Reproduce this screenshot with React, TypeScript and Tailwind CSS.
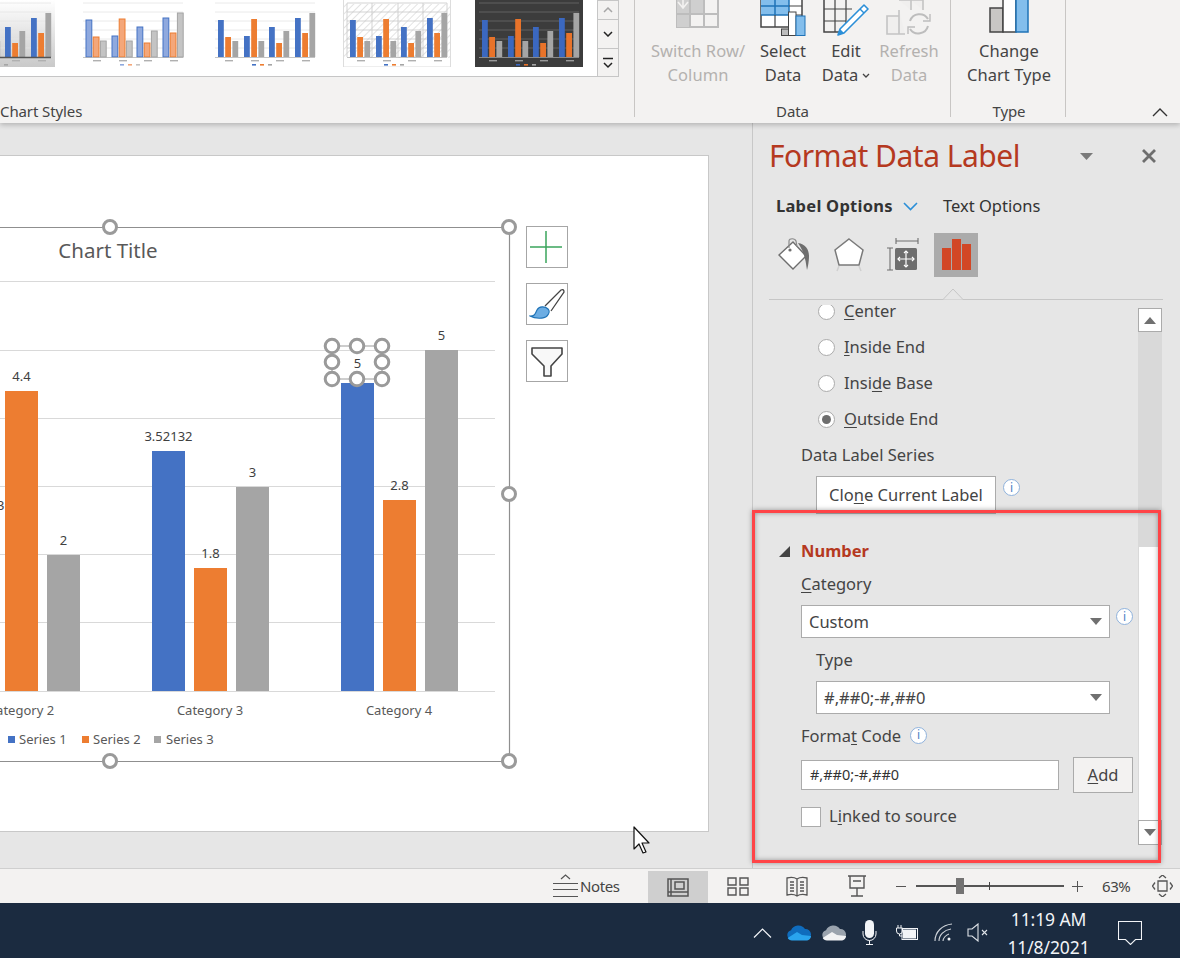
import React from 'react';

const FONT = "font-['Noto_Sans','Open_Sans',sans-serif]";

const CATS = [
  { x: 7, h: [37, 20, 16] },
  { x: 33, h: [21, 38, 16] },
  { x: 58, h: [30, 14, 26] },
  { x: 84, h: [39, 24, 44] },
];

type Variant = 'gradient' | 'soft' | 'plain' | 'hatch' | 'dark';

const MiniChart = ({ id, variant }: { id: string; variant: Variant }) => {
  const grid = variant === 'dark' ? '#6a6a6a' : variant === 'hatch' ? '#c8c8c8' : '#e4e4e4';
  const colors =
    variant === 'dark'
      ? ['#3b68c0', '#e8732a', '#a5a5a5']
      : variant === 'soft'
        ? ['#8fa9de', '#f4a77a', '#c4c4c4']
        : ['#4472c4', '#ed7d31', '#a5a5a5'];
  const strokes = variant === 'soft' ? ['#4472c4', '#ed7d31', '#a5a5a5'] : colors;
  return (
    <svg viewBox="0 0 108 67" className="w-[108px] h-[67px] shrink-0 blur-[0.5px]">
      <defs>
        <linearGradient id={id + 'g'} x1="0" y1="0" x2="0" y2="1">
          <stop offset="0" stopColor="#ffffff" />
          <stop offset="1" stopColor="#c9c9c9" />
        </linearGradient>
        <pattern id={id + 'h'} width="5" height="5" patternUnits="userSpaceOnUse" patternTransform="rotate(45)">
          <line x1="0" y1="0" x2="0" y2="5" stroke="#dcdcdc" strokeWidth="1.6" />
        </pattern>
      </defs>
      {variant === 'gradient' && <rect width="108" height="67" fill={`url(#${id}g)`} />}
      {variant === 'hatch' && (
        <>
          <rect width="108" height="54" y="4" fill={`url(#${id}h)`} />
          <rect x="0.5" y="-2" width="107" height="69" fill="none" stroke="#dddddd" />
        </>
      )}
      {variant === 'dark' && <rect width="108" height="67" fill="#3c3c3c" />}
      {[3, 12, 21, 30, 39, 48].map(y => (
        <line key={y} x1="4" x2="104" y1={y} y2={y} stroke={grid} strokeWidth="0.8" />
      ))}
      {variant === 'hatch' &&
        [4, 29, 55, 80, 104].map(x => <line key={x} x1={x} x2={x} y1="3" y2="57" stroke={grid} strokeWidth="0.8" />)}
      {CATS.map(c =>
        c.h.map((h, i) => (
          <rect
            key={c.x + '-' + i}
            x={c.x + i * 7.2}
            y={57 - h}
            width="5.8"
            height={h}
            fill={colors[i]}
            stroke={strokes[i]}
            strokeWidth={variant === 'soft' ? 1 : 0}
          />
        )),
      )}
      <line x1="4" x2="104" y1="57.5" y2="57.5" stroke={variant === 'gradient' ? '#555' : '#aaa'} strokeWidth={variant === 'gradient' ? 1.5 : 0.7} />
      {[14, 40, 65, 91].map(x => (
        <rect key={x} x={x} y="60" width="8" height="1.4" fill={variant === 'dark' ? '#999' : '#b0b0b0'} />
      ))}
      <rect x="41" y="64" width="4" height="1.6" fill={colors[0]} />
      <rect x="49" y="64" width="4" height="1.6" fill={colors[1]} />
      <rect x="57" y="64" width="4" height="1.6" fill={colors[2]} />
    </svg>
  );
};

const SpinButton = ({ h, children, last }: { h: string; children?: React.ReactNode; last?: boolean }) => (
  <div className={`${h} flex items-center justify-center border-x border-t border-[#c6c6c6] bg-[#f3f2f1] ${last ? 'border-b' : ''}`}>
    {children}
  </div>
);

const SwitchIcon = () => (
  <svg width="44" height="28" viewBox="0 0 44 28">
    <path d="M1 -2h41v29H1z" fill="#f3f2f1" stroke="#bdbdbd" strokeWidth="2" />
    <path d="M1 -2h27v16H14v13H1z" fill="#cfcfcf" />
    <path d="M14 -2v29M28 -2v29M1 14h41" stroke="#bdbdbd" strokeWidth="2" fill="none" />
    <path d="M2 2l5 6 5-6M7 8V0" fill="none" stroke="#f3f2f1" strokeWidth="1.6" />
  </svg>
);

const SelectDataIcon = () => (
  <svg width="46" height="36" viewBox="0 0 46 36">
    <rect x="1" y="-2" width="41" height="29" fill="#fff" stroke="#444" strokeWidth="1.5" />
    <rect x="1" y="-2" width="28" height="17" fill="#83beec" />
    <path d="M15 -2v17M29 -2v17M1 6h28M1 15h28" stroke="#1f73b7" strokeWidth="1.5" fill="none" />
    <path d="M29 6h13M15 15v12M29 15h13" stroke="#444" strokeWidth="1.2" fill="none" />
    <rect x="21.5" y="29" width="7" height="6.5" fill="#bdbdbd" stroke="#444" />
    <rect x="28.5" y="12" width="7.5" height="23.5" fill="#fff" stroke="#444" />
    <rect x="36" y="16" width="9" height="19.5" fill="#83beec" stroke="#1f73b7" />
  </svg>
);

const EditDataIcon = () => (
  <svg width="47" height="36" viewBox="0 0 47 36">
    <path d="M1 -2h31M1 -2v34h20" fill="none" stroke="#444" strokeWidth="1.5" />
    <path d="M1 9h28M1 21h22M12 -2v34M23 -2v26" fill="none" stroke="#444" strokeWidth="1.2" />
    <path d="M41 5l4 4-24 24-6 2 2-6z" fill="#fff" stroke="#2b8fd8" strokeWidth="1.6" strokeLinejoin="round" />
    <path d="M15 35l2-6 4 4z" fill="#2b8fd8" />
    <path d="M37 9l4 4" stroke="#2b8fd8" strokeWidth="1.4" />
  </svg>
);

const RefreshIcon = () => (
  <svg width="46" height="36" viewBox="0 0 46 36">
    <path d="M1 16h12v18H1zM13 0h12v10M25 0h12v10M13 10v24h6" fill="#f0efee" stroke="#c4c4c4" strokeWidth="1.6" />
    <path d="M24 21a10 10 0 0 1 18-2M42 26a10 10 0 0 1-18 3" fill="none" stroke="#bdbdbd" strokeWidth="2" />
    <path d="M44 14v7h-7M22 34v-7h7" fill="none" stroke="#bdbdbd" strokeWidth="1.4" />
  </svg>
);

const ChangeTypeIcon = () => (
  <svg width="40" height="33" viewBox="0 0 40 33">
    <rect x="1" y="8" width="13" height="24" fill="#c8c6c4" stroke="#444" strokeWidth="1.5" />
    <rect x="14" y="-2" width="13" height="34" fill="#fff" stroke="#444" strokeWidth="1.5" />
    <rect x="27" y="-2" width="12" height="34" fill="#83beec" stroke="#1f73b7" strokeWidth="1.5" />
  </svg>
);

const Command = ({
  w,
  ml,
  icon,
  lines,
  off,
}: {
  w: string;
  ml: string;
  icon: React.ReactNode;
  lines: React.ReactNode[];
  off?: boolean;
}) => (
  <div className={`${w} ${ml} flex flex-col items-center shrink-0`}>
    <div className="h-[39px] flex items-start justify-center">{icon}</div>
    <div className={`flex flex-col items-center text-[16.5px] leading-[24px] whitespace-nowrap tracking-[0.05px] ${off ? 'text-[#b3b1af]' : 'text-[#444]'}`}>
      {lines.map((l, i) => (
        <span key={i}>{l}</span>
      ))}
    </div>
  </div>
);

const Ribbon = () => (
  <div className="h-[123px] shrink-0 bg-[#f3f2f1] relative z-10 shadow-[0_2px_5px_rgba(0,0,0,0.22)] flex">
    <div className="w-[635px] h-[117px] border-r border-[#c8c6c4] flex flex-col shrink-0">
      <div className="flex h-[77px] shrink-0">
        <div className="w-[597px] h-[77px] bg-white border-b border-[#c6c6c6] overflow-hidden shrink-0">
          <div className="flex gap-[24px] ml-[-53px]">
            <MiniChart id="m1" variant="gradient" />
            <MiniChart id="m2" variant="soft" />
            <MiniChart id="m3" variant="plain" />
            <MiniChart id="m4" variant="hatch" />
            <MiniChart id="m5" variant="dark" />
          </div>
        </div>
        <div className="w-[22px] flex flex-col">
          <SpinButton h="h-[19px]">
            <svg width="10" height="6" viewBox="0 0 10 6"><path d="M1 5l4-4 4 4" fill="none" stroke="#a6a6a6" strokeWidth="1.5" /></svg>
          </SpinButton>
          <SpinButton h="h-[29px]">
            <svg width="10" height="6" viewBox="0 0 10 6"><path d="M1 1l4 4 4-4" fill="none" stroke="#222" strokeWidth="1.5" /></svg>
          </SpinButton>
          <SpinButton h="h-[29px]" last>
            <svg width="10" height="12" viewBox="0 0 10 12"><path d="M0 1.5h10" stroke="#222" strokeWidth="1.5" /><path d="M1 6l4 4 4-4" fill="none" stroke="#222" strokeWidth="1.5" /></svg>
          </SpinButton>
        </div>
      </div>
      <div className="text-[15px] leading-[20px] text-[#444] mt-[24px] tracking-[-0.1px] shrink-0">Chart Styles</div>
    </div>
    <div className="w-[316px] h-[117px] border-r border-[#c8c6c4] flex flex-col shrink-0">
      <div className="flex h-[101px] shrink-0">
        <Command ml="ml-[14px]" w="w-[98px]" off icon={<SwitchIcon />} lines={['Switch Row/', 'Column']} />
        <Command ml="ml-[11px]" w="w-[50px]" icon={<SelectDataIcon />} lines={['Select', 'Data']} />
        <Command ml="ml-[13px]" w="w-[50px]" icon={<EditDataIcon />} lines={['Edit', <span key="d" className="flex items-center gap-[4px]">Data<svg width="8" height="5" viewBox="0 0 8 5"><path d="M1 1l3 3 3-3" fill="none" stroke="#444" strokeWidth="1.3" /></svg></span>]} />
        <Command ml="ml-[8px]" w="w-[60px]" off icon={<RefreshIcon />} lines={['Refresh', 'Data']} />
      </div>
      <div className="text-[15px] leading-[20px] text-[#444] text-center tracking-[-0.1px] shrink-0">Data</div>
    </div>
    <div className="w-[115px] h-[117px] border-r border-[#c8c6c4] pl-[2px] flex flex-col shrink-0">
      <div className="h-[101px] flex justify-center shrink-0">
        <Command ml="" w="w-[90px]" icon={<ChangeTypeIcon />} lines={['Change', 'Chart Type']} />
      </div>
      <div className="text-[15px] leading-[20px] text-[#444] text-center tracking-[-0.1px] shrink-0">Type</div>
    </div>
    <div className="flex-1 flex justify-end items-end pr-[12px] pb-[6px]">
      <svg width="16" height="9" viewBox="0 0 16 9"><path d="M1 8l7-7 7 7" fill="none" stroke="#333" strokeWidth="1.4" /></svg>
    </div>
  </div>
);

const BARS = [
  { x: 5, w: 33, top: 391, c: '#ed7d31', label: '4.4' },
  { x: 47, w: 33, top: 555, c: '#a5a5a5', label: '2' },
  { x: 152, w: 33, top: 451, c: '#4472c4', label: '3.52132' },
  { x: 194, w: 33, top: 568, c: '#ed7d31', label: '1.8' },
  { x: 236, w: 33, top: 487, c: '#a5a5a5', label: '3' },
  { x: 341, w: 33, top: 383, c: '#4472c4', label: '' },
  { x: 383, w: 33, top: 500, c: '#ed7d31', label: '2.8' },
  { x: 425, w: 33, top: 350, c: '#a5a5a5', label: '5' },
];

const Handle = ({ x, y, r = 6.5 }: { x: number; y: number; r?: number }) => (
  <circle cx={x} cy={y} r={r} fill="#fff" stroke="#9a9a9a" strokeWidth="3" />
);

const Chart = () => (
  <svg viewBox="0 156 709 675" className="absolute inset-0 w-[709px] h-[675px]">
    <g fontFamily="'Noto Sans', sans-serif">
      {[281, 350, 418, 486, 554, 622].map(y => (
        <line key={y} x1="0" x2="495" y1={y + 0.5} y2={y + 0.5} stroke="#d9d9d9" />
      ))}
      {BARS.map(b => (
        <g key={b.x}>
          <rect x={b.x} y={b.top} width={b.w} height={691 - b.top} fill={b.c} />
          {b.label && (
            <text x={b.x + 16.5} y={b.top - 10} textAnchor="middle" fontSize="13" fill="#404040">{b.label}</text>
          )}
        </g>
      ))}
      <text x="-3" y="510" fontSize="13" fill="#404040">3</text>
      <line x1="0" x2="495" y1="691.5" y2="691.5" stroke="#d9d9d9" />
      <text x="108" y="258" textAnchor="middle" fontSize="20.5" fill="#595959">Chart Title</text>
      <text x="21" y="715" textAnchor="middle" fontSize="13" fill="#595959">Category 2</text>
      <text x="210" y="715" textAnchor="middle" fontSize="13" fill="#595959">Category 3</text>
      <text x="399" y="715" textAnchor="middle" fontSize="13" fill="#595959">Category 4</text>
      <rect x="8" y="736" width="7" height="7" fill="#4472c4" />
      <text x="19" y="744" fontSize="13" fill="#595959">Series 1</text>
      <rect x="82" y="736" width="7" height="7" fill="#ed7d31" />
      <text x="93" y="744" fontSize="13" fill="#595959">Series 2</text>
      <rect x="154" y="736" width="7" height="7" fill="#a5a5a5" />
      <text x="166" y="744" fontSize="13" fill="#595959">Series 3</text>
      <path d="M0 227.5H509.5V761.5H0" fill="none" stroke="#8f8f8f" strokeWidth="1.2" />
      <Handle x={110} y={227} />
      <Handle x={509} y={227} />
      <Handle x={509} y={494} />
      <Handle x={110} y={761} />
      <Handle x={509} y={761} />
      <rect x="332" y="346" width="50" height="33" fill="#fff" fillOpacity="0" stroke="#9c9c9c" />
      <text x="357.5" y="368" textAnchor="middle" fontSize="13" fill="#404040">5</text>
      {[[332, 346], [357, 346], [382, 346], [332, 362], [382, 362], [332, 379], [357, 379], [382, 379]].map(([x, y]) => (
        <Handle key={x + '-' + y} x={x} y={y} r={6.8} />
      ))}
    </g>
  </svg>
);

const SideButton = ({ children }: { children: React.ReactNode }) => (
  <div className="w-[42px] h-[42px] bg-white border border-[#a6a6a6] flex items-center justify-center">{children}</div>
);

const Canvas = () => (
  <div className="w-[752px] shrink-0 pt-[32px] bg-[#e6e6e6] overflow-hidden">
    <div className="relative w-[709px] h-[677px] bg-white border border-l-0 border-[#c8c8c8]">
      <Chart />
      <div className="absolute left-[526px] top-[70px] flex flex-col gap-[15px]">
        <SideButton>
          <svg width="34" height="34" viewBox="0 0 34 34" className="-ml-[3px] -mt-px"><path d="M17 1v32M1 17h32" stroke="#3ba55c" strokeWidth="1.5" /></svg>
        </SideButton>
        <SideButton>
          <svg width="36" height="32" viewBox="0 0 36 32">
            <path d="M16 18L32 2c2-1 3 0 3 2L22 23" fill="#fff" stroke="#444" strokeWidth="1.3" />
            <path d="M1 28c5 0 5-2 7-6 2-4 8-4 11-1 2 2 1 5-1 7-3 3-12 3-17 0z" fill="#6cade3" stroke="#1f73b7" strokeWidth="1.2" />
          </svg>
        </SideButton>
        <SideButton>
          <svg width="34" height="34" viewBox="0 0 34 34">
            <path d="M2 4h30v6L21 22v10h-7V22L2 10z" fill="#f8f8f8" stroke="#444" strokeWidth="1.6" strokeLinejoin="round" />
          </svg>
        </SideButton>
      </div>
    </div>
  </div>
);

const Radio = ({ label, on }: { label: React.ReactNode; on?: boolean }) => (
  <div className="h-[36px] flex items-center pl-[65px] gap-[9px]">
    <span className="w-[17px] h-[17px] rounded-full bg-white border border-[#ababab] flex items-center justify-center shrink-0">
      {on && <span className="w-[9px] h-[9px] rounded-full bg-[#6e6e6e]" />}
    </span>
    <span>{label}</span>
  </div>
);

const InfoDot = ({ className = '' }: { className?: string }) => (
  <span className={`w-[17px] h-[17px] rounded-full border border-[#8fb2dc] bg-white text-[#4a80c4] text-[12px] leading-none flex items-center justify-center shrink-0 ${className}`}>i</span>
);

const Arrow = () => (
  <svg width="12" height="7" viewBox="0 0 12 7" className="shrink-0"><path d="M0 0h12L6 7z" fill="#707070" /></svg>
);

const Select = ({ value, width }: { value: string; width: string }) => (
  <div className={`${width} h-[33px] bg-white border border-[#ababab] flex items-center justify-between px-[7px] shrink-0`}>
    <span className="pt-px">{value}</span>
    <Arrow />
  </div>
);

const Scrollbar = () => (
  <div className="w-[24px] mr-[18px] mt-[3px] mb-[23px] flex flex-col shrink-0">
    <div className="h-[24px] bg-white border border-[#ababab] flex items-center justify-center shrink-0">
      <svg width="12" height="7" viewBox="0 0 12 7"><path d="M0 7h12L6 0z" fill="#707070" /></svg>
    </div>
    <div className="h-[215px] bg-[#d9d9d9] shrink-0" />
    <div className="flex-1 bg-white border-x border-[#d9d9d9]" />
    <div className="h-[25px] bg-white border border-[#ababab] flex items-center justify-center shrink-0">
      <Arrow />
    </div>
  </div>
);

const Pane = () => (
  <div className="flex-1 min-w-0 bg-[#e6e6e6] border-l border-[#c8c8c8] flex flex-col text-[16.5px] text-[#444] overflow-hidden">
    <div className="h-[38px] mt-[14px] pl-[16px] pr-[23px] flex items-center shrink-0">
      <span className="text-[30px] leading-none text-[#b5391f] tracking-[-0.5px]">Format Data Label</span>
      <svg width="13" height="7" viewBox="0 0 13 7" className="ml-auto"><path d="M0 0h13L6.5 7z" fill="#7a7a7a" /></svg>
      <svg width="16" height="16" viewBox="0 0 16 16" className="ml-[48px]"><path d="M2 2l12 12M14 2L2 14" stroke="#6e6e6e" strokeWidth="2.8" /></svg>
    </div>
    <div className="h-[30px] mt-[16px] pl-[23px] flex items-center shrink-0">
      <span className="font-bold text-[#333] tracking-[0.25px] w-[117px] whitespace-nowrap shrink-0">Label Options</span>
      <svg width="15" height="9" viewBox="0 0 15 9" className="ml-[10px] shrink-0"><path d="M1 1l6.5 6.5L14 1" fill="none" stroke="#2b8fd8" strokeWidth="1.6" /></svg>
      <span className="ml-[25px] text-[#333]">Text Options</span>
    </div>
    <div className="h-[44px] mt-[12px] pl-[25px] flex items-center shrink-0">
      <svg width="33" height="34" viewBox="0 0 33 34" className="shrink-0">
        <path d="M1 17L15 4l13 14-13 13z" fill="#fff" stroke="#6e6e6e" strokeWidth="1.4" />
        <path d="M11 10V3c0-3 6-3 7 0l1 6" fill="none" stroke="#8a8a8a" strokeWidth="1.2" />
        <circle cx="12" cy="12" r="1.6" fill="#6e6e6e" />
        <path d="M20 5c7 1 11 6 11 13 0 5-1 11-2 14-1-5-1-8-2-11-1-5-3-10-7-16z" fill="#6e6e6e" />
      </svg>
      <svg width="32" height="34" viewBox="0 0 32 34" className="ml-[22px] shrink-0">
        <path d="M16 1l14 11-4 15H6L2 12z" fill="#fff" stroke="#7a7a7a" strokeWidth="1.5" />
        <path d="M6 28l-2 5M26 28l2 5" stroke="#d0d0d0" strokeWidth="1.5" />
      </svg>
      <svg width="33" height="34" viewBox="0 0 33 34" className="ml-[21px] shrink-0">
        <path d="M10 3h22M10 0v6M32 0v6M1 10h6M1 32h6M4 10v22" fill="none" stroke="#6e6e6e" strokeWidth="1.1" />
        <rect x="9" y="10" width="22" height="22" rx="1.5" fill="#6e6e6e" />
        <path d="M20 13v16M12 21h16" stroke="#fff" strokeWidth="1.2" />
        <path d="M18 15l2-2 2 2M18 27l2 2 2-2M14 19l-2 2 2 2M26 19l2 2-2 2" fill="none" stroke="#fff" strokeWidth="1.2" />
      </svg>
      <div className="ml-[15px] w-[44px] h-[44px] bg-[#ababab] flex items-end justify-center gap-px pb-[7px] shrink-0">
        <span className="w-[9px] h-[22px] bg-[#d24726]" />
        <span className="w-[9px] h-[31px] bg-[#d24726]" />
        <span className="w-[9px] h-[26px] bg-[#d24726]" />
      </div>
    </div>
    <div className="relative h-px mt-[22px] ml-[16px] mr-[17px] bg-[#c6c6c6] shrink-0">
      <svg width="22" height="12" viewBox="0 0 22 12" className="absolute left-[173px] bottom-0">
        <path d="M0 11.5h1L11 1l10 10.5h1" fill="#e6e6e6" stroke="#c6c6c6" />
      </svg>
    </div>
    <div className="flex-1 min-h-0 flex overflow-hidden mt-[5px]">
      <div className="flex-1 min-w-0 mt-[-12px]">
        <Radio label={<><u className="underline-offset-2">C</u>enter</>} />
        <Radio label={<><u className="underline-offset-2">I</u>nside End</>} />
        <Radio label={<>Insi<u className="underline-offset-2">d</u>e Base</>} />
        <Radio on label={<><u className="underline-offset-2">O</u>utside End</>} />
        <div className="h-[36px] pl-[48px] flex items-center">Data Label Series</div>
        <div className="mt-[3px] ml-[63px] flex items-start gap-[7px]">
          <div className="w-[180px] h-[38px] bg-white border border-[#ababab] flex items-center justify-center">
            <span>Clo<u className="underline-offset-2">n</u>e Current Label</span>
          </div>
          <InfoDot className="mt-[3px]" />
        </div>
        <div className="h-[24px] mt-[25px] pl-[26px] flex items-center">
          <svg width="11" height="11" viewBox="0 0 11 11" className="shrink-0"><path d="M11 0v11H0z" fill="#444" /></svg>
          <span className="ml-[11px] font-bold text-[#b5391f]">Number</span>
        </div>
        <div className="h-[24px] mt-[9px] pl-[48px] flex items-center"><span><u className="underline-offset-2">C</u>ategory</span></div>
        <div className="mt-[9px] pl-[48px] flex items-start gap-[6px]">
          <Select value="Custom" width="w-[309px]" />
          <InfoDot className="mt-[3px]" />
        </div>
        <div className="h-[24px] mt-[10px] pl-[63px] flex items-center">Type</div>
        <div className="mt-[9px] pl-[63px]"><Select value="#,##0;-#,##0" width="w-[294px]" /></div>
        <div className="h-[24px] mt-[10px] pl-[48px] flex items-center gap-[9px]">
          <span>Forma<u className="underline-offset-2">t</u> Code</span>
          <InfoDot className="-mt-[2px]" />
        </div>
        <div className="mt-[9px] pl-[48px] flex items-center">
          <div className="w-[258px] h-[30px] bg-white border border-[#ababab] flex items-center pl-[8px] text-[14.5px] text-[#333]">#,##0;-#,##0</div>
          <div className="ml-[14px] w-[60px] h-[36px] bg-[#f3f2f1] border border-[#ababab] flex items-center justify-center"><span><u className="underline-offset-2">A</u>dd</span></div>
        </div>
        <div className="mt-[12px] pl-[48px] flex items-center gap-[8px]">
          <span className="w-[20px] h-[20px] bg-white border border-[#ababab] shrink-0" />
          <span className="-mt-px">L<u className="underline-offset-2">i</u>nked to source</span>
        </div>
      </div>
      <Scrollbar />
    </div>
  </div>
);

const StatusBar = () => (
  <div className="h-[35px] shrink-0 bg-[#f3f2f1] border-t border-[#cfcfcf] flex items-center pl-[553px] text-[#444]">
    <svg width="25" height="24" viewBox="0 0 25 24" className="shrink-0">
      <path d="M8 5l4.500-4 4.500 4M0 9.500h25M0 15.500h25M0 22.500h25" fill="none" stroke="#555" strokeWidth="1.2" />
    </svg>
    <span className="ml-[2px] w-[41px] text-[15px] tracking-[-0.4px]">Notes</span>
    <div className="ml-[27px] w-[60px] self-stretch mt-[2px] bg-[#cfcfcf] flex items-center justify-center shrink-0">
      <svg width="22" height="19" viewBox="0 0 22 19"><path d="M1 1h20v17H1zM4 1v17M1 14h20M8 4h9v7H8z" fill="none" stroke="#555" strokeWidth="1.5" /></svg>
    </div>
    <svg width="22" height="19" viewBox="0 0 22 19" className="ml-[19px] shrink-0"><path d="M1 1h8v7H1zM13 1h8v7h-8zM1 11h8v7H1zM13 11h8v7h-8z" fill="none" stroke="#555" strokeWidth="1.4" /></svg>
    <svg width="22" height="21" viewBox="0 0 22 21" className="ml-[37px] shrink-0"><path d="M11 3C8 1 5 1 1 2v17c4-1 7-1 10 1 3-2 6-2 10-1V2c-4-1-7-1-10 1zM11 3v17M4 6h4M4 9h4M4 12h4M4 15h4M14 6h4M14 9h4M14 12h4M14 15h4" fill="none" stroke="#555" strokeWidth="1.3" /></svg>
    <svg width="20" height="22" viewBox="0 0 20 22" className="ml-[39px] shrink-0"><path d="M1 1h18M3 1v12h14V1M10 13v8M4 21h12M6 6h8" fill="none" stroke="#555" strokeWidth="1.4" /></svg>
    <span className="ml-[29px] w-[10px] h-px bg-[#555] shrink-0" />
    <div className="ml-[10px] w-[148px] h-[16px] relative flex items-center shrink-0">
      <div className="w-full h-[2px] bg-[#555]" />
      <span className="absolute left-[40px] w-[8px] h-[16px] bg-[#737373]" />
      <span className="absolute left-[73px] w-px h-[8px] bg-[#444]" />
    </div>
    <svg width="11" height="11" viewBox="0 0 11 11" className="ml-[8px] shrink-0"><path d="M5.500 0v11M0 5.500h11" stroke="#555" /></svg>
    <span className="ml-[19px] w-[31px] text-[15px] tracking-[-0.4px] whitespace-nowrap">63%</span>
    <svg width="21" height="22" viewBox="0 0 21 22" className="ml-[19px] shrink-0"><path d="M6 6h9v10H6zM7 3l3.500-3L14 3M7 19l3.500 3 3.500-3M3 7.500L0.500 11 3 14.500M18 7.500l2.500 3.500-2.500 3.500" fill="none" stroke="#555" strokeWidth="1.3" /></svg>
  </div>
);

const Taskbar = () => (
  <div className="h-[55px] shrink-0 bg-[#1b2b40] flex items-center pl-[753px] pt-[4px] text-[#f2f4f7]">
    <svg width="19" height="10" viewBox="0 0 19 10" className="shrink-0"><path d="M1 9.500L9.500 1 18 9.500" fill="none" stroke="#f2f4f7" strokeWidth="1.2" /></svg>
    <svg width="24" height="17" viewBox="0 0 24 17" className="ml-[15px] shrink-0">
      <path d="M5 16a5 5 0 0 1-1-9.800A8 8 0 0 1 18 5a5.500 5.500 0 0 1 1 11z" fill="#0f6cbd" />
      <path d="M5 16.500c-2 0-3.500-1-4.300-2.500L10 8l5 3 9 1c0 2.500-2 4.500-5 4.500z" fill="#2aa4ee" />
    </svg>
    <svg width="24" height="17" viewBox="0 0 24 17" className="ml-[11px] shrink-0">
      <path d="M5 16a5 5 0 0 1-1-9.800A8 8 0 0 1 18 5a5.500 5.500 0 0 1 1 11z" fill="#9aa3ae" />
      <path d="M5 16.500c-2 0-3.500-1-4.300-2.500L10 8l5 3 9 1c0 2.500-2 4.500-5 4.500z" fill="#f1f2f4" />
    </svg>
    <svg width="15" height="25" viewBox="0 0 15 25" className="ml-[16px] shrink-0">
      <rect x="3" y="0" width="9" height="18" rx="4.500" fill="#f2f4f7" />
      <path d="M1 11v3a6.500 6.500 0 0 0 13 0v-3M7.500 20.500V24M4 24.500h7" fill="none" stroke="#f2f4f7" />
    </svg>
    <svg width="24" height="15" viewBox="0 0 24 15" className="ml-[18px] shrink-0">
      <path d="M3 0v3M6 0v3M1.500 3h6v3a3 3 0 0 1-6 0zM4.500 9v2h3" fill="none" stroke="#f2f4f7" />
      <rect x="7" y="3.500" width="15.500" height="11" fill="none" stroke="#f2f4f7" />
      <rect x="8" y="4.500" width="13" height="9" fill="#f2f4f7" />
    </svg>
    <svg width="20" height="19" viewBox="0 0 20 19" className="ml-[15px] shrink-0">
      <path d="M1 18C1 9 8 2 18 1M5 18c0-6 5-11 12-12M9 18c0-3 3-6 6-7" fill="none" stroke="#cfd4da" strokeWidth="1.1" />
      <circle cx="15" cy="16" r="1.500" fill="#f2f4f7" />
    </svg>
    <svg width="22" height="19" viewBox="0 0 22 19" className="ml-[13px] shrink-0">
      <path d="M1 6h4l6-5v17l-6-5H1zM15 7l5 5M20 7l-5 5" fill="none" stroke="#dfe3e8" strokeWidth="1.1" />
    </svg>
    <div className="ml-[17px] w-[85px] text-center text-[17.5px] leading-[28px] tracking-[-0.1px] whitespace-nowrap shrink-0">
      <div>11:19 AM</div>
      <div>11/8/2021</div>
    </div>
    <svg width="24" height="24" viewBox="0 0 24 24" className="ml-[27px] shrink-0">
      <path d="M0.500 0.500h23v18h-6l-5 5-5-5h-7z" fill="none" stroke="#f2f4f7" strokeWidth="1.1" />
    </svg>
  </div>
);

export default function App() {
  return (
    <div className={`${FONT} relative w-[1180px] h-[958px] overflow-hidden flex flex-col bg-[#e6e6e6]`}>
      <Ribbon />
      <div className="flex-1 min-h-0 flex">
        <Canvas />
        <Pane />
      </div>
      <StatusBar />
      <Taskbar />
      {/* annotation on top of the pane */}
      <div className="absolute left-[752px] top-[510px] w-[409px] h-[353px] border-[3px] border-[#ff4447] shadow-[0_0_5px_rgba(0,0,0,0.35),inset_0_0_5px_rgba(0,0,0,0.35)]" />
      <svg width="21" height="29" viewBox="0 0 21 29" className="absolute left-[633px] top-[826px]">
        <path d="M1 1v22l5-5 4 9 3-1-4-9h7z" fill="#fff" stroke="#111" strokeWidth="1.2" strokeLinejoin="round" />
      </svg>
    </div>
  );
}
